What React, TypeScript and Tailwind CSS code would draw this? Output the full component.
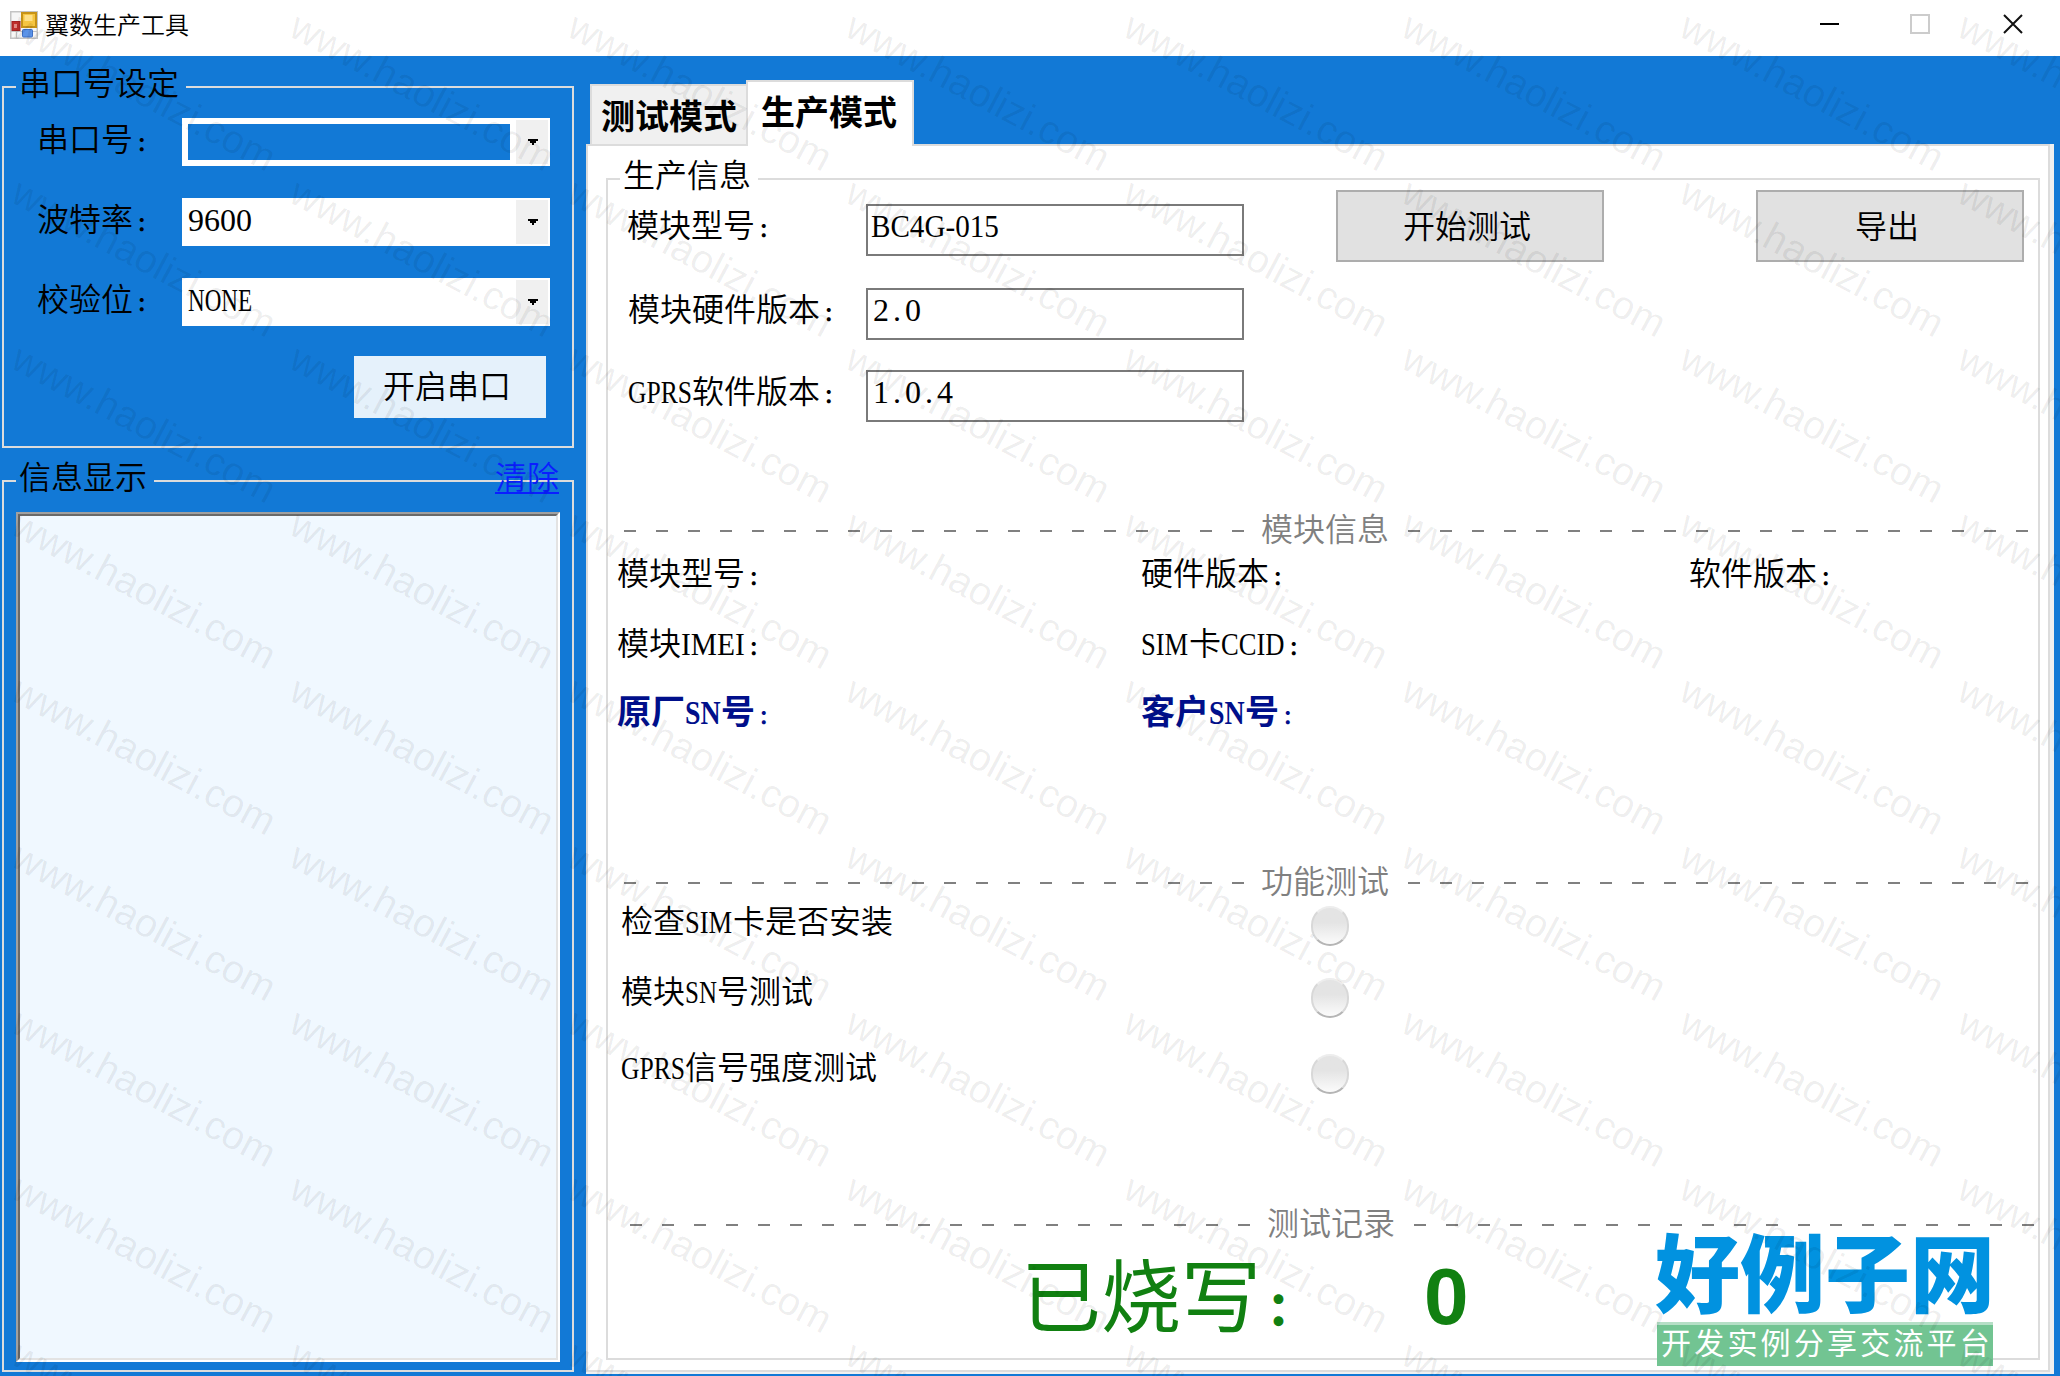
import type { ReactNode } from "react";

const WATERMARKS = Array.from({ length: 72 }, (_, i) => i);

export default function App() {
  return (
    <div className="relative flex h-[1376px] w-[2060px] flex-col overflow-hidden bg-[#1279d6] font-['Liberation_Serif','Noto_Sans_CJK_SC',sans-serif] text-[32px] leading-[32px] font-[350] text-black">
      <TitleBar />
      <div className="flex flex-1">
        <div className="ml-0.5 flex w-[572px] flex-col pt-3">
          <PortSettings />
          <MessageLog />
        </div>
        <div className="ml-3 w-[1468px]">
          <Tabs />
          <div className="h-[1230px] bg-[#f0f0f0] pr-1 pb-0.5">
            <div className="h-full border-2 border-[#dcdcdc] bg-white pt-3.5 pl-[18px]">
              <ProductionPage />
            </div>
          </div>
        </div>
      </div>
      <SiteLogo />
      <Watermark />
    </div>
  );
}

function TitleBar() {
  return (
    <header className="flex h-14 items-start bg-white">
      <svg className="mt-[11px] ml-2.5 h-7 w-7" viewBox="0 0 28 28">
        <rect x="0.75" y="0.75" width="26.5" height="26.5" fill="#f6f6f6" stroke="#c4c4c4" strokeWidth="1.5" />
        <path d="M1 20.5h26M6.5 20v7" stroke="#c4c4c4" />
        <rect x="12" y="2" width="14" height="14" fill="#f5c542" stroke="#c79317" strokeWidth="2" />
        <rect x="14.5" y="4" width="8" height="6" fill="#fde08a" />
        <rect x="2" y="10.5" width="8" height="9" fill="#c0302c" stroke="#a32222" />
        <rect x="4" y="13" width="3" height="4" fill="#e08a84" />
        <rect x="12.5" y="18.5" width="10" height="7.5" rx="1" fill="#5b93e8" stroke="#3d6fc4" />
      </svg>
      <span className="mt-1.5 ml-[7px] font-['Noto_Sans_CJK_SC',sans-serif] text-[24px] leading-[36px]">
        翼数生产工具
      </span>
      <svg className="mt-3 mr-[30px] ml-auto h-6 w-[210px]" viewBox="0 0 210 24" fill="none">
        <path d="M-1 12h20" stroke="#000" strokeWidth="2" />
        <rect x="91" y="3" width="18" height="18" stroke="#cccccc" strokeWidth="2" />
        <path d="M184 3l18 18M202 3l-18 18" stroke="#111" strokeWidth="2" />
      </svg>
    </header>
  );
}

function PortSettings() {
  return (
    <fieldset className="h-[380px] border-2 border-[#dcdcdc]">
      <legend className="ml-3 h-[38px] w-[170px] pl-[3px]">串口号设定</legend>
      <div className="mt-3 ml-[33px] flex flex-col gap-8">
        <Combo label="串口号" focused />
        <Combo label="波特率" value="9600" />
        <Combo
          label="校验位"
          value={<Latin width="w-16" scale="scale-x-[0.72]">NONE</Latin>}
        />
      </div>
      <button className="mt-[30px] ml-[350px] block h-[62px] w-48 bg-[#e5f1fb] pr-1.5 pb-px">
        开启串口
      </button>
    </fieldset>
  );
}

function Combo({
  label,
  value,
  focused,
}: {
  label: string;
  value?: ReactNode;
  focused?: boolean;
}) {
  return (
    <div className="flex h-12">
      <span className="w-[145px] pt-1.5 whitespace-nowrap">
        {label}
        <Colon />
      </span>
      <div className="flex w-[368px] bg-white p-0.5">
        <div className="flex-1 pt-1 pr-1.5 pb-1 pl-1">
          {focused ? <div className="h-9 bg-[#1279d6]" /> : value}
        </div>
        <div className="flex w-8 items-center justify-center bg-[#f0f0f0] pl-0.5">
          <svg className="h-1.5 w-2.5" viewBox="0 0 10 6" shapeRendering="crispEdges">
            <path d="M0 0h10v2H8v2H6v2H4V4H2V2H0z" />
          </svg>
        </div>
      </div>
    </div>
  );
}

// Full-width cell with the small, low-set dots of a bitmap font
function Colon() {
  return (
    <span className="inline-block w-8 pl-1 text-[19px] leading-none font-black">
      ：
    </span>
  );
}

// Half-width run: squeezes serif letters into 16px cells
function Latin({
  children,
  width,
  scale,
}: {
  children: string;
  width: string;
  scale: string;
}) {
  return (
    <span className={`inline-block whitespace-nowrap ${width}`}>
      <span className={`inline-block origin-left ${scale}`}>{children}</span>
    </span>
  );
}

function MessageLog() {
  return (
    <div className="relative mt-3.5">
      <fieldset className="h-[910px] border-2 border-[#dcdcdc]">
        <legend className="ml-3 h-[38px] w-[138px] pl-[3px]">信息显示</legend>
        <div className="mt-3 ml-3 h-[850px] w-[544px] border-2 border-t-[#a0a0a0] border-r-white border-b-white border-l-[#a0a0a0]">
          <div className="h-full border-2 border-t-[#696969] border-r-[#e3e3e3] border-b-[#e3e3e3] border-l-[#696969] bg-[#f0f8ff]" />
        </div>
      </fieldset>
      <a className="absolute top-0 left-[493px] h-8 border-b-2 border-[#0a1eff] text-[#0a1eff]">
        清除
      </a>
    </div>
  );
}

function Tabs() {
  return (
    <div className="flex h-[88px] items-end pl-1 text-[34px] font-bold">
      <div className="h-[60px] w-[156px] border-2 border-r-0 border-b-0 border-[#dcdcdc] bg-[#f0f0f0] pt-4 pl-[9px]">
        测试模式
      </div>
      <div className="relative z-10 -mb-0.5 h-[66px] w-[168px] border-2 border-b-0 border-[#dcdcdc] bg-white pt-4 pl-[13px]">
        生产模式
      </div>
    </div>
  );
}

function ProductionPage() {
  return (
    <fieldset className="h-[1200px] w-[1434px] border-2 border-[#dcdcdc]">
      <legend className="ml-3 h-[38px] w-[138px] pl-[3px]">生产信息</legend>
      <div className="flex h-[316px]">
        <div className="w-[728px] pt-1.5 pl-[19px]">
          <Field
            label="模块型号"
            value={<Latin width="w-32" scale="scale-x-[0.91]">BC4G-015</Latin>}
          />
          <div className="h-8" />
          <Field
            label={<span className="ml-px">模块硬件版本</span>}
            value={<span className="ml-0.5 tracking-[4px]">2.0</span>}
          />
          <div className="h-[30px]" />
          <Field
            label={
              <>
                <Latin width="ml-px w-16" scale="scale-x-[0.8]">GPRS</Latin>软件版本
              </>
            }
            value={<span className="ml-0.5 tracking-[4px]">1.0.4</span>}
          />
        </div>
        <div className="-mt-2 flex gap-[152px]">
          <PushButton>开始测试</PushButton>
          <PushButton>导出</PushButton>
        </div>
      </div>

      <Divider title="模块信息" />
      <div className="grid h-[320px] auto-rows-[32px] grid-cols-[524px_548px_1fr] gap-y-[38px] pt-3 pl-[9px] whitespace-nowrap">
        <span>模块型号<Colon /></span>
        <span>硬件版本<Colon /></span>
        <span>软件版本<Colon /></span>
        <span>
          模块<Latin width="w-16" scale="scale-x-[0.92]">IMEI</Latin><Colon />
        </span>
        <span>
          <Latin width="w-12" scale="scale-x-[0.83]">SIM</Latin>卡
          <Latin width="w-16" scale="scale-x-[0.83]">CCID</Latin><Colon />
        </span>
        <span />
        <span className="-mt-px text-[34px] font-bold text-[#000f8b]">
          原厂<Latin width="w-9" scale="scale-x-[0.82]">SN</Latin>号<Colon />
        </span>
        <span className="-mt-px text-[34px] font-bold text-[#000f8b]">
          客户<Latin width="w-9" scale="scale-x-[0.82]">SN</Latin>号<Colon />
        </span>
      </div>

      <Divider title="功能测试" />
      <div className="h-[310px] pt-2 pl-[13px]">
        <div className="flex h-[70px]">
          <span className="w-[690px]">
            检查<Latin width="w-12" scale="scale-x-[0.83]">SIM</Latin>卡是否安装
          </span>
          <Lamp />
        </div>
        <div className="flex h-[76px]">
          <span className="w-[690px]">
            模块<Latin width="w-8" scale="scale-x-[0.78]">SN</Latin>号测试
          </span>
          <div className="mt-0.5">
            <Lamp />
          </div>
        </div>
        <div className="flex">
          <span className="w-[690px]">
            <Latin width="w-16" scale="scale-x-[0.8]">GPRS</Latin>信号强度测试
          </span>
          <div className="mt-0.5">
            <Lamp />
          </div>
        </div>
      </div>

      <div className="ml-1.5">
        <Divider title="测试记录" />
      </div>
      <div className="flex pt-5 pl-[413px] text-[80px] leading-[80px] text-[#118011]">
        <span className="-mt-px w-[403px] font-normal">
          已烧写
          <span className="relative -top-px inline-block w-20 pl-1.5 text-[46px] leading-none font-black">
            ：
          </span>
        </span>
        <span className="-mt-[3px] font-['Liberation_Sans',sans-serif] font-bold">0</span>
      </div>
    </fieldset>
  );
}

function Field({ label, value }: { label: ReactNode; value: ReactNode }) {
  return (
    <div className="flex h-[52px]">
      <span className="w-[239px] pt-1.5 whitespace-nowrap">
        {label}
        <Colon />
      </span>
      <div className="w-[378px] border-2 border-[#7a7a7a] bg-white pt-1 pl-[3px]">{value}</div>
    </div>
  );
}

function PushButton({ children }: { children: ReactNode }) {
  return (
    <button className="h-[72px] w-[268px] border-2 border-[#adadad] bg-[#e1e1e1] pt-px pr-1.5">
      {children}
    </button>
  );
}

function Divider({ title }: { title: string }) {
  return (
    <div className="flex h-8 pl-4 text-[#808080]">
      <Dashes />
      <span className="w-[164px] pl-[17px] whitespace-nowrap">{title}</span>
      <Dashes />
    </div>
  );
}

function Dashes() {
  return (
    <div className="mt-4 h-0.5 w-[620px] shrink-0 bg-[repeating-linear-gradient(90deg,#808080_0_12px,transparent_12px_32px)]" />
  );
}

function Lamp() {
  return (
    <div className="h-10 w-[38px] rounded-full border-2 border-t-[#ededed] border-r-[#d8d8d8] border-b-[#b5b5b5] border-l-[#d8d8d8] bg-linear-to-b from-[#e4e4e4] from-40% to-[#fbfbfb]" />
  );
}

function SiteLogo() {
  return (
    <div className="absolute top-[1227px] left-[1655px] w-[338px] font-['Noto_Sans_CJK_SC',sans-serif] whitespace-nowrap">
      <div className="h-[95px] text-[85px] leading-[84px] font-black text-[#0192e0]">
        好例子网
      </div>
      <div className="ml-0.5 h-11 border-t-[3px] border-[#b5dfc6] bg-[#72c492] pl-1 text-[30px] leading-[32px] font-normal tracking-[3.2px] text-white">
        开发实例分享交流平台
      </div>
    </div>
  );
}

function Watermark() {
  return (
    <div className="pointer-events-none absolute top-[5px] left-[25px] z-20 grid auto-rows-[166px] grid-cols-[repeat(8,278px)] font-['Liberation_Sans',sans-serif] text-[39.5px] leading-[40px] font-normal text-black/7">
      {WATERMARKS.map((i) => (
        <span key={i} className="block origin-top-left rotate-[28deg] whitespace-nowrap">
          www.haolizi.com
        </span>
      ))}
    </div>
  );
}
